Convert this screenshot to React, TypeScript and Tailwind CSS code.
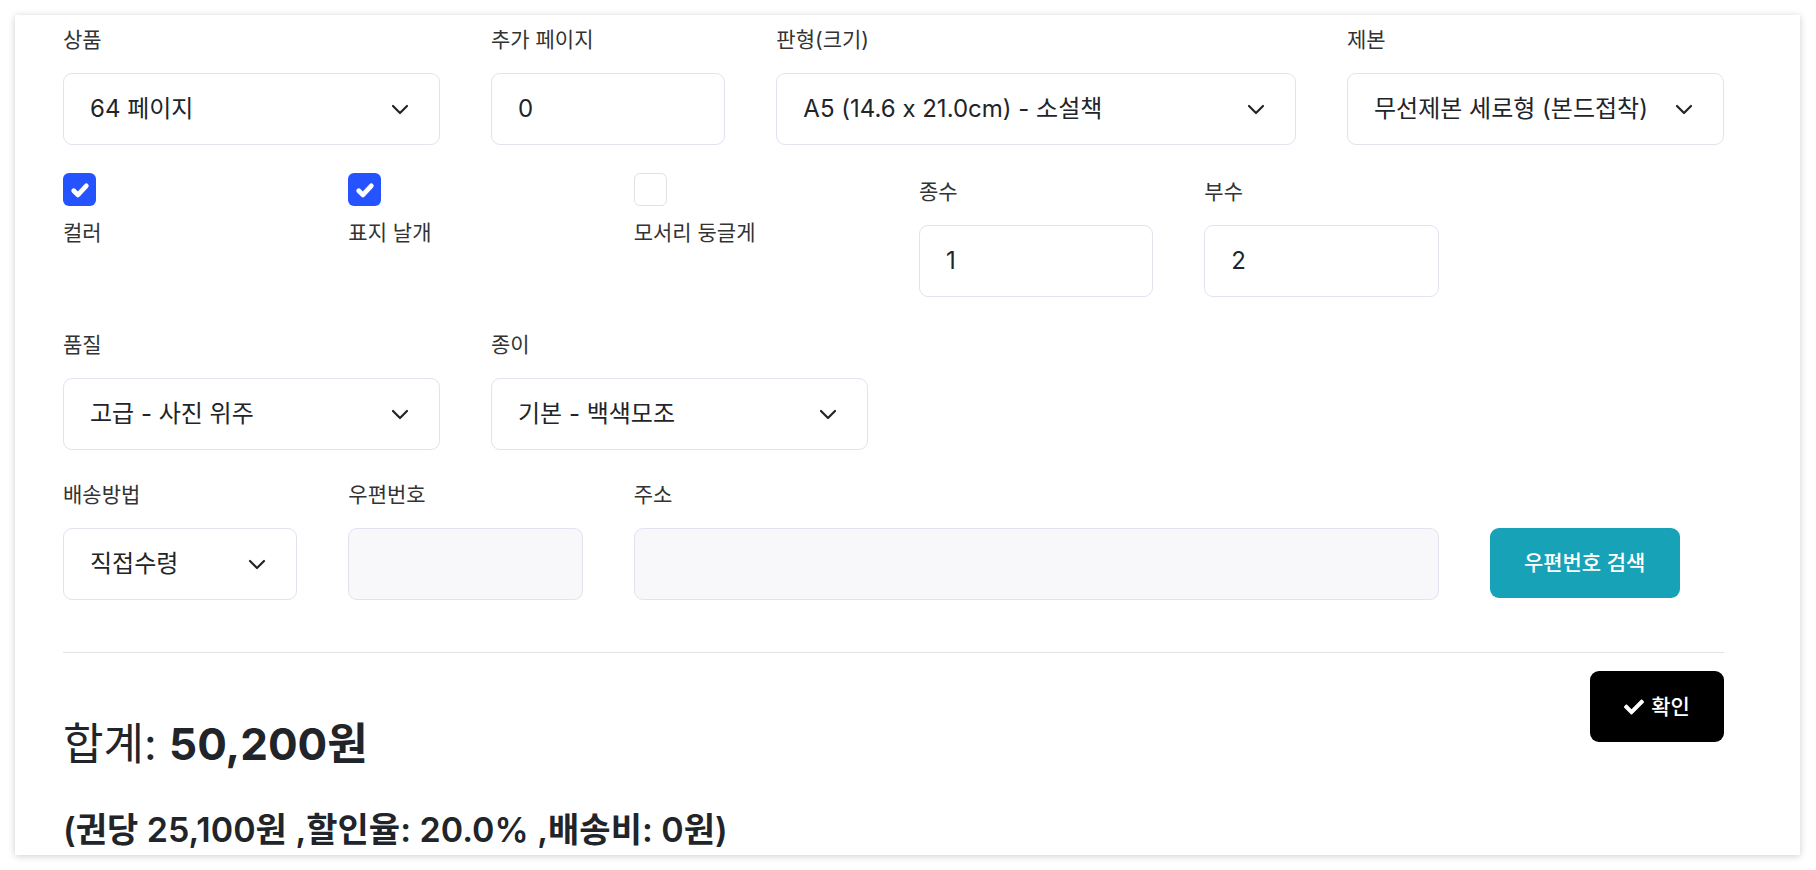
import React from 'react';
import { FaCheck } from 'react-icons/fa';

const Chevron = () => (
  <svg width="18" height="11" viewBox="0 0 18 11" fill="none" className="shrink-0">
    <polyline points="2,2 9,9 16,2" stroke="#212529" strokeWidth="2.2" strokeLinecap="round" strokeLinejoin="round" />
  </svg>
);

const Label = ({ children }: { children: React.ReactNode }) => (
  <div className="h-[30px] leading-[30px] text-[21px] text-[#333]">{children}</div>
);

const SelectBox = ({ value }: { value: string }) => (
  <div className="h-[72px] flex items-center justify-between gap-3 rounded-[9px] border border-[#e1e3ee] bg-white pl-[26px] pr-[30px]">
    <span className="flex-1 min-w-0 whitespace-nowrap overflow-hidden text-[24px] text-[#212529]">{value}</span>
    <Chevron />
  </div>
);

const InputBox = ({ value, muted }: { value?: string; muted?: boolean }) => (
  <div
    className={`h-[72px] flex items-center rounded-[9px] border border-[#e1e3ee] pl-[26px] text-[24px] text-[#212529] ${
      muted ? 'bg-[#f8f8fa]' : 'bg-white'
    }`}
  >
    {value}
  </div>
);

const Field = ({ label, children, className = '' }: { label: string; children: React.ReactNode; className?: string }) => (
  <div className={className}>
    <Label>{label}</Label>
    <div className="mt-[18px]">{children}</div>
  </div>
);

const Check = ({ label, checked }: { label: string; checked?: boolean }) => (
  <div className="col-span-2">
    {checked ? (
      <div className="w-[33px] h-[33px] rounded-[6px] bg-[#2553ff] flex items-center justify-center">
        <svg width="28" height="28" viewBox="0 0 20 20" fill="none">
          <path d="M5.5 10.5l3 3 6-6.5" stroke="white" strokeWidth="3.4" strokeLinecap="round" strokeLinejoin="round" />
        </svg>
      </div>
    ) : (
      <div className="w-[33px] h-[33px] rounded-[6px] border border-[#dfe1e6] bg-white" />
    )}
    <div className="mt-[12px]">
      <Label>{label}</Label>
    </div>
  </div>
);

export default function App() {
  return (
    <div className="min-h-[870px] bg-white pt-[15px] font-[Inter,'Noto_Sans_CJK_KR',sans-serif] [font-variant-ligatures:no-contextual]">
      <div className="ml-[15px] w-[1785px] bg-white shadow-[0_1px_7px_rgba(0,0,0,0.2)] pt-[10px] pb-[4px] pl-[48px] pr-[76px]">
        {/* row 1 */}
        <div className="grid grid-cols-12 gap-x-[51px]">
          <Field label="상품" className="col-span-3">
            <SelectBox value="64 페이지" />
          </Field>
          <Field label="추가 페이지" className="col-span-2">
            <InputBox value="0" />
          </Field>
          <Field label="판형(크기)" className="col-span-4">
            <SelectBox value="A5 (14.6 x 21.0cm) - 소설책" />
          </Field>
          <Field label="제본" className="col-span-3">
            <SelectBox value="무선제본 세로형 (본드접착)" />
          </Field>
        </div>

        {/* row 2 */}
        <div className="grid grid-cols-12 gap-x-[51px] mt-[28px]">
          <Check label="컬러" checked />
          <Check label="표지 날개" checked />
          <Check label="모서리 둥글게" />
          <Field label="종수" className="col-span-2 pt-[4px]">
            <InputBox value="1" />
          </Field>
          <Field label="부수" className="col-span-2 pt-[4px]">
            <InputBox value="2" />
          </Field>
        </div>

        {/* row 3 */}
        <div className="grid grid-cols-12 gap-x-[51px] mt-[33px]">
          <Field label="품질" className="col-span-3">
            <SelectBox value="고급 - 사진 위주" />
          </Field>
          <Field label="종이" className="col-span-3">
            <SelectBox value="기본 - 백색모조" />
          </Field>
        </div>

        {/* row 4 */}
        <div className="grid grid-cols-12 gap-x-[51px] mt-[30px]">
          <Field label="배송방법" className="col-span-2">
            <SelectBox value="직접수령" />
          </Field>
          <Field label="우편번호" className="col-span-2">
            <InputBox muted />
          </Field>
          <Field label="주소" className="col-span-6">
            <InputBox muted />
          </Field>
          <div className="col-span-2 pt-[48px]">
            <button className="h-[70px] w-[190px] rounded-[9px] bg-[#17a2b8] text-white text-[21px] font-medium">
              우편번호 검색
            </button>
          </div>
        </div>

        <div className="mt-[52px] border-t border-[#e3e3e3]" />

        <div className="mt-[18px] flex justify-between items-start">
          <div className="text-[#212529]">
            <div className="pt-[47px] text-[44px] leading-[52px]">
              합계: <span className="font-bold">50,200원</span>
            </div>
            <div className="mt-[39px] text-[34px] leading-[42px] font-semibold">
              (권당 25,100원 ,할인율: 20.0% ,배송비: 0원)
            </div>
          </div>
          <button className="h-[71px] w-[134px] rounded-[9px] bg-black text-white text-[21px] font-medium flex items-center justify-center gap-[7px]">
            <FaCheck size={20} />
            확인
          </button>
        </div>
      </div>
    </div>
  );
}
